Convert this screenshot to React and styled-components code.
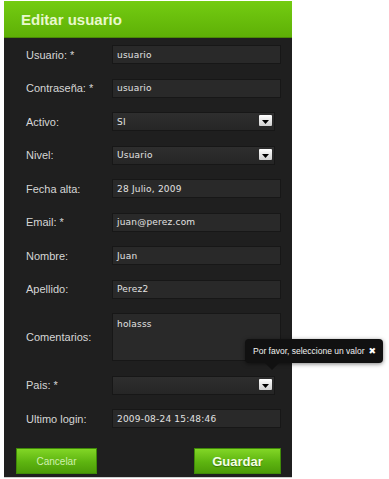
import React from 'react';
import styled, { createGlobalStyle } from 'styled-components';

const Global = createGlobalStyle`
  body {
    margin: 0;
    background: #fff;
    font-family: "Liberation Sans", Arial, sans-serif;
  }
`;

const Panel = styled.div`
  margin: 1px 0 0 4px;
  width: 288px;
  background: #1f1f1f;
  border-bottom: 1px solid #cfcfcf;
`;

const Header = styled.div`
  height: 36px;
  display: flex;
  align-items: center;
  padding-left: 17px;
  background: linear-gradient(#74cc12, #5eb006);
  border-bottom: 1px solid #4a8a06;
`;

const Title = styled.h1`
  margin: 0;
  font: bold 15px "Liberation Sans", Arial, sans-serif;
  color: #e8f8cc;
`;

const Form = styled.div`
  display: grid;
  grid-template-columns: 86px 169px;
  row-gap: 14.5px;
  align-items: center;
  padding: 7px 0 0 22px;
`;

const Label = styled.label`
  font-size: 11px;
  color: #d6d6d6;
`;

const Field = styled.div`
  position: relative;
  width: ${p => (p.select ? '163px' : '169px')};
`;

const Input = styled.div`
  box-sizing: border-box;
  height: ${p => (p.tall ? '48px' : '19px')};
  display: flex;
  align-items: ${p => (p.tall ? 'flex-start' : 'center')};
  padding: ${p => (p.tall ? '5px 4px' : '0 4px')};
  background: ${p => (p.select ? 'linear-gradient(#2e2e2e, #262626)' : '#292929')};
  border: 1px solid #171717;
  font: 9px "DejaVu Sans", Verdana, sans-serif;
  color: #e2e2e2;
  letter-spacing: 0.2px;
`;

const Arrow = styled.span`
  position: absolute;
  right: 3px;
  top: 3px;
  width: 13px;
  height: 11px;
  background: linear-gradient(#ffffff, #cfcfcf);
  border-radius: 1px;
  display: flex;
  align-items: flex-end;
  justify-content: center;
  padding-bottom: 2px;
  box-sizing: border-box;
`;

const Tip = styled.div`
  position: absolute;
  left: 133px;
  top: -37px;
  width: 138px;
  height: 24px;
  box-sizing: border-box;
  display: flex;
  align-items: center;
  justify-content: space-between;
  padding: 0 7px 0 8px;
  background: #111;
  border-radius: 4px;
  box-shadow: 0 1px 4px rgba(0, 0, 0, 0.5);
  font: 8.5px "Liberation Sans", Arial, sans-serif;
  color: #f2f2f2;
  white-space: nowrap;
  z-index: 5;
  &:after {
    content: '';
    position: absolute;
    left: 20px;
    bottom: -7px;
    border: 7px solid transparent;
    border-bottom: 0;
    border-top-color: #111;
  }
`;

const Close = styled.span`
  font: bold 9px "DejaVu Sans", sans-serif;
  color: #fff;
`;

const Actions = styled.div`
  display: flex;
  justify-content: space-between;
  padding: 20px 11px 3px 12px;
`;

const Button = styled.button`
  height: 26px;
  width: ${p => (p.primary ? '87px' : '81px')};
  border: 1px solid #3f8a08;
  background: linear-gradient(#82d626, #5db410 55%, #4c9c08);
  color: ${p => (p.primary ? '#f4ffe6' : '#d0f0b0')};
  font: ${p => (p.primary ? 'bold 13px' : '10px')} "Liberation Sans", Arial, sans-serif;
  text-shadow: ${p => (p.primary ? '0 1px 1px rgba(0,0,0,0.35)' : 'none')};
  padding: 0;
`;

const rows = [
  ['Usuario: *', 'usuario'],
  ['Contraseña: *', 'usuario'],
  ['Activo:', 'SI', 'select'],
  ['Nivel:', 'Usuario', 'select'],
  ['Fecha alta:', '28 Julio, 2009'],
  ['Email: *', 'juan@perez.com'],
  ['Nombre:', 'Juan'],
  ['Apellido:', 'Perez2'],
  ['Comentarios:', 'holasss', 'tall'],
  ['Pais: *', '', 'select', true],
  ['Ultimo login:', '2009-08-24 15:48:46'],
];

function DownArrow() {
  return (
    <svg width="7" height="4" viewBox="0 0 7 4">
      <path d="M0 0h7L3.5 4z" fill="#000" />
    </svg>
  );
}

export default function App() {
  return (
    <>
      <Global />
      <Panel>
        <Header>
          <Title>Editar usuario</Title>
        </Header>
        <Form>
          {rows.map(([label, value, kind, tip]) => (
            <React.Fragment key={label}>
              <Label>{label}</Label>
              <Field select={kind === 'select'}>
                <Input select={kind === 'select'} tall={kind === 'tall'}>{value}</Input>
                {kind === 'select' && (
                  <Arrow>
                    <DownArrow />
                  </Arrow>
                )}
                {tip && (
                  <Tip>
                    Por favor, seleccione un valor
                    <Close>✖</Close>
                  </Tip>
                )}
              </Field>
            </React.Fragment>
          ))}
        </Form>
        <Actions>
          <Button>Cancelar</Button>
          <Button primary>Guardar</Button>
        </Actions>
      </Panel>
    </>
  );
}
